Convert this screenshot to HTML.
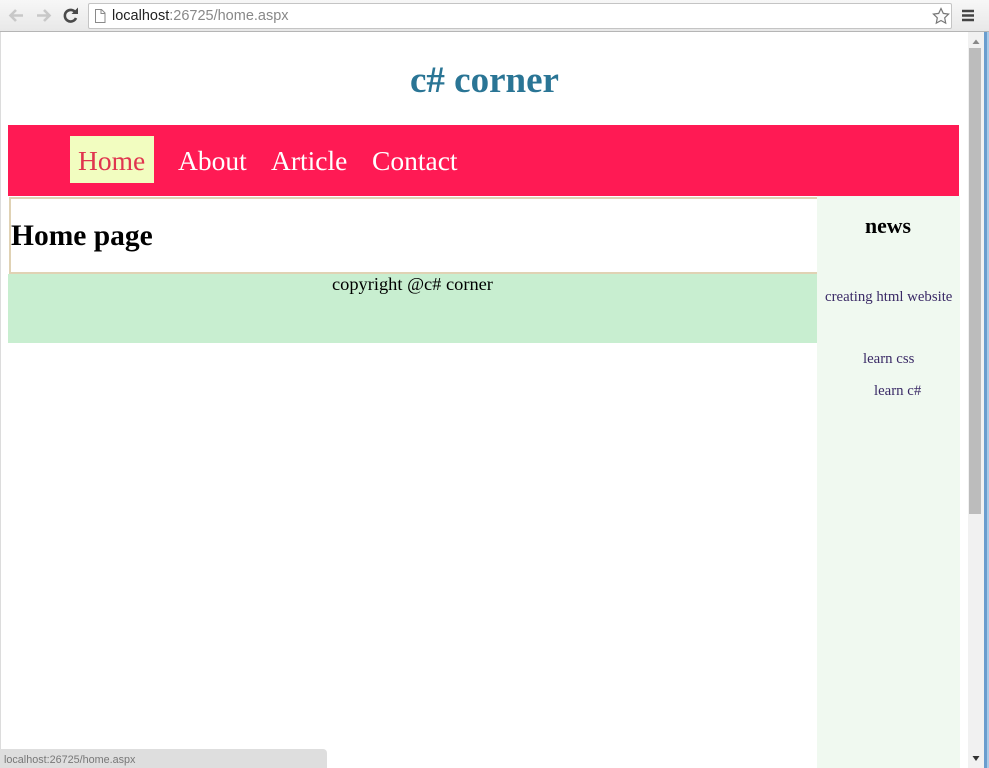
<!DOCTYPE html>
<html><head><meta charset="utf-8"><title>c# corner</title>
<style>
html,body{margin:0;padding:0;width:989px;height:768px;overflow:hidden;background:#fff}
div,span{position:absolute;white-space:nowrap}
body{font-family:"Liberation Serif",serif;color:#000}
.ui{font-family:"Liberation Sans",sans-serif}
.nav{color:#fff;font-size:27.5px;line-height:32px;top:145px}
.side{color:#3a2a66;font-size:14.8px;line-height:18px}
</style></head><body>
<!-- toolbar -->
<div style="left:0;top:0;width:989px;height:31px;background:linear-gradient(#f7f7f7,#e8e8e8);border-bottom:1px solid #b5b5b5"></div>
<div style="left:88px;top:3px;width:862px;height:24px;background:#fff;border:1px solid #c4c4c4;border-radius:2px;box-sizing:content-box"></div>
<svg style="position:absolute;left:0;top:0" width="989" height="32" fill="none">
<path d="M23 15.500H11M16 10l-5.500 5.500L16 21" stroke="#c8c8c8" stroke-width="2.600"/>
<path d="M37 15.500H49M44 10l5.500 5.500L44 21" stroke="#c8c8c8" stroke-width="2.600"/>
<path d="M75.500 12.500A5.800 5.800 0 1 0 76 18" stroke="#4a4a4a" stroke-width="2.600"/>
<path d="M71.500 14H78V7.500Z" fill="#4a4a4a"/>
<path d="M95.500 9.500h6l3.500 3.500v9.500h-9.500Z M101 9.500V13.500h4" stroke="#8a8a8a" fill="#fff"/>
<path d="M941 8.500l2.300 4.900 5.300.7-3.900 3.700 1 5.300-4.700-2.600-4.700 2.600 1-5.300-3.900-3.700 5.300-.7Z" stroke="#777" stroke-width="1.200" fill="#fafafa"/>
<path d="M962 11h12M962 15.500h12M962 20h12" stroke="#444" stroke-width="2.400"/>
</svg>
<div class="ui" style="left:112px;top:8px;font-size:14.500px;line-height:17px;color:#222">localhost<span style="position:static;color:#888">:26725/home.aspx</span></div>
<!-- page -->
<div style="left:0;top:32px;width:1px;height:736px;background:#dcdcdc"></div>
<div style="left:410px;top:60px;font-size:37px;line-height:42px;font-weight:bold;color:#2a7595">c# corner</div>
<div style="left:8px;top:125px;width:951px;height:71px;background:#ff1a54"></div>
<div style="left:70px;top:136px;width:84px;height:47px;background:#f2fdc0"></div>
<div class="nav" style="left:78px;color:#e0354f">Home</div>
<div class="nav" style="left:178px">About</div>
<div class="nav" style="left:271px">Article</div>
<div class="nav" style="left:372px">Contact</div>
<div style="left:9px;top:197px;width:808px;height:73px;border:2px solid #e0d2b4;border-right:0"></div>
<div style="left:11px;top:219px;font-size:29.500px;line-height:34px;font-weight:bold">Home page</div>
<div style="left:8px;top:274px;width:809px;height:69px;background:#c8eed0"></div>
<div style="left:332px;top:273px;font-size:18.400px;line-height:22px">copyright @c# corner</div>
<div style="left:817px;top:196px;width:143px;height:572px;background:#f0f9f0"></div>
<div style="left:865px;top:214px;font-size:21.800px;line-height:25px;font-weight:bold">news</div>
<div class="side" style="left:825px;top:288px">creating html website</div>
<div class="side" style="left:863px;top:350px">learn css</div>
<div class="side" style="left:874px;top:382px">learn c#</div>
<!-- scrollbar -->
<div style="left:968px;top:32px;width:16px;height:736px;background:#f1f1f1"></div>
<div style="left:969px;top:48px;width:12px;height:466px;background:#bcbcbc"></div>
<svg style="position:absolute;left:968px;top:32px" width="16" height="736"><path d="M4.500 12L8 7.500 11.500 12Z" fill="#888"/><path d="M4.500 724L8 729 11.500 724Z" fill="#333"/></svg>
<div style="left:984px;top:32px;width:3px;height:736px;background:#6a9dce"></div>
<div style="left:987px;top:32px;width:2px;height:736px;background:#a9cbe8"></div>
<!-- status -->
<div style="left:0;top:749px;width:327px;height:19px;background:#dedede;border-radius:0 4px 0 0"></div>
<div class="ui" style="left:4px;top:753px;font-size:10.800px;line-height:14px;color:#777">localhost:26725/home.aspx</div>
</body></html>
